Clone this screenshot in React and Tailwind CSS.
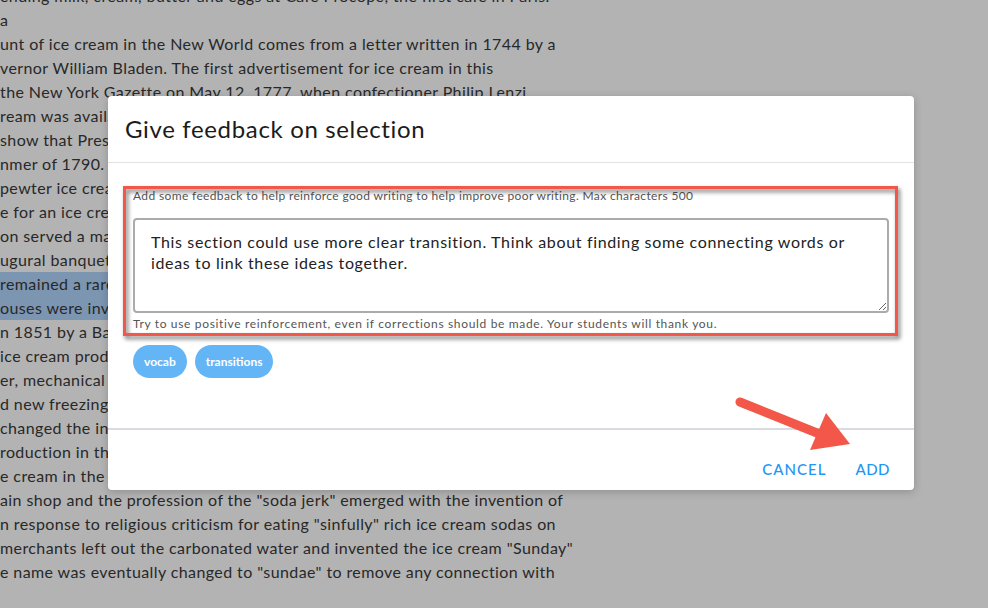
import React from "react";

const lines = [
  "ending milk, cream, butter and eggs at Cafe Procope, the first cafe in Paris.",
  "a",
  "unt of ice cream in the New World comes from a letter written in 1744 by a",
  "vernor William Bladen. The first advertisement for ice cream in this",
  "the New York Gazette on May 12, 1777, when confectioner Philip Lenzi",
  "ream was available almost every day. Records kept by a Chatham Street, New York,",
  "show that President George Washington spent approximately $200 for ice cream during the",
  "nmer of 1790. Inventory records of Mount Vernon taken after Washington's death revealed",
  "pewter ice cream pots. President Thomas Jefferson was said to have a favorite 18-step",
  "e for an ice cream delicacy that resembled a modern-day Baked Alaska. In 1812, Dolley",
  "on served a magnificent strawberry ice cream creation at President Madison's second",
  "ugural banquet at the White House.",
  "remained a rare and exotic dessert enjoyed mostly by the elite until around 1800, when",
  "ouses were invented.",
  "n 1851 by a Baltimore milk dealer named Jacob Fussell. Like other American",
  "ice cream production soared because of technological innovations, including steam",
  "er, mechanical refrigeration, the homogenizer, electric power and motors, packing machines,",
  "d new freezing processes and equipment. In addition, motorized delivery vehicles",
  "changed the industry. Due to ongoing technological advances, today's total frozen dairy",
  "roduction in the United States is more than 1.6 billion gallons per year.",
  "e cream in the late 19th century became a symbol of American culture. The soda",
  "ain shop and the profession of the \"soda jerk\" emerged with the invention of",
  "n response to religious criticism for eating \"sinfully\" rich ice cream sodas on",
  "merchants left out the carbonated water and invented the ice cream \"Sunday\"",
  "e name was eventually changed to \"sundae\" to remove any connection with",
];

export default function App() {
  return (
    <div
      className="relative w-[988px] h-[608px] overflow-hidden bg-[#b3b3b3]"
      style={{ fontFamily: "Lato, 'Open Sans', sans-serif" }}
    >
      <div className="-mt-[16px] text-[16px] leading-[24px] tracking-[0.4px] text-[#282828]">
        {lines.map((l, i) => (
          <div
            key={i}
            className={
              "whitespace-nowrap h-[24px] " +
              (i === 12 || i === 13 ? "bg-[#7c95b1] w-[700px]" : "")
            }
          >
            {l}
          </div>
        ))}
      </div>

      {/* Dialog */}
      <div className="absolute left-[108px] top-[96px] w-[806px] h-[394px] bg-white rounded-[4px] shadow-[0_2px_8px_rgba(0,0,0,0.2)] flex flex-col">
        <div className="h-[67px] border-b border-[#e3e3e3] flex items-center px-[17px] pb-[1px]">
          <h2 className="text-[24px] tracking-[0.65px] text-[#1b1b1b] font-normal leading-none">
            Give feedback on selection
          </h2>
        </div>

        <div className="flex-1 px-[25px] pt-[26px] border-b-2 border-[#d8dce0]">
          <div className="relative">
            <div className="text-[12px] leading-[14px] tracking-[0.36px] text-[#555] whitespace-nowrap">
              Add some feedback to help reinforce good writing to help improve poor writing. Max characters 500
            </div>
            <textarea
              className="mt-[15px] block w-full h-[95px] border-2 border-[#ababab] rounded-[4px] px-[16px] py-[11px] text-[16px] leading-[21px] tracking-[0.65px] text-[#222] outline-none"
              style={{ fontFamily: "Lato, 'Open Sans', sans-serif" }}
              defaultValue="This section could use more clear transition. Think about finding some connecting words or ideas to link these ideas together."
            />
            <div className="mt-[4px] text-[12px] leading-[14px] tracking-[0.66px] text-[#555] whitespace-nowrap">
              Try to use positive reinforcement, even if corrections should be made. Your students will thank you.
            </div>
            <div className="absolute -left-[10px] -top-[3px] -right-[9px] -bottom-[5px] border-[3px] border-[#f2574a] [filter:drop-shadow(2px_3px_2px_rgba(0,0,0,0.55))] pointer-events-none" />
          </div>

          <div className="mt-[14px] flex gap-[8px]">
            <span className="h-[33px] px-[11px] rounded-full bg-[#64b5f6] text-white text-[12px] font-bold flex items-center">
              vocab
            </span>
            <span className="h-[33px] px-[11px] rounded-full bg-[#64b5f6] text-white text-[12px] font-bold flex items-center">
              transitions
            </span>
          </div>
        </div>

        <div className="h-[60px] flex items-center justify-end pr-[16px] gap-[13px] pt-[18px]">
          <button className="px-[8px] text-[15px] font-medium tracking-[1px] text-[#2196f3]">
            CANCEL
          </button>
          <button className="px-[8px] text-[15px] font-medium tracking-[0.5px] text-[#2196f3]">
            ADD
          </button>
        </div>
      </div>

      {/* Annotation arrow */}
      <svg
        className="absolute left-0 top-0 pointer-events-none"
        width="988"
        height="608"
        viewBox="0 0 988 608"
      >
        <line
          x1="740"
          y1="402"
          x2="822"
          y2="435"
          stroke="#f2574a"
          strokeWidth="9"
          strokeLinecap="round"
        />
        <polygon points="826,413 810,450 850,444" fill="#f2574a" />
      </svg>
    </div>
  );
}
